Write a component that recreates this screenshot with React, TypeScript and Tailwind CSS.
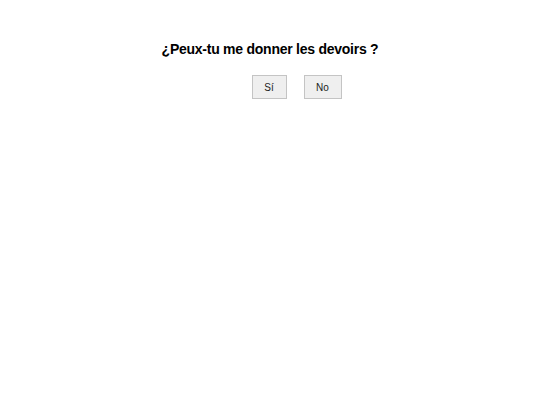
export default function App() {
  return (
    <div className="min-h-[405px] w-full bg-white font-['Liberation_Sans',Arial,sans-serif] text-black">
      <h1 className="pt-[40px] text-center text-[14px] font-bold leading-[18px] tracking-[-0.25px]">
        ¿Peux-tu me donner les devoirs ?
      </h1>
      <div className="mt-[17px] flex justify-center gap-[17px] pl-[53px]">
        <button
          type="button"
          className="h-[24px] w-[35px] border border-[#c4c4c4] bg-[#efefef] text-[10px] text-[#222]"
        >
          Sí
        </button>
        <button
          type="button"
          className="h-[24px] w-[38px] border border-[#c4c4c4] bg-[#efefef] text-[10px] text-[#222]"
        >
          No
        </button>
      </div>
    </div>
  );
}
